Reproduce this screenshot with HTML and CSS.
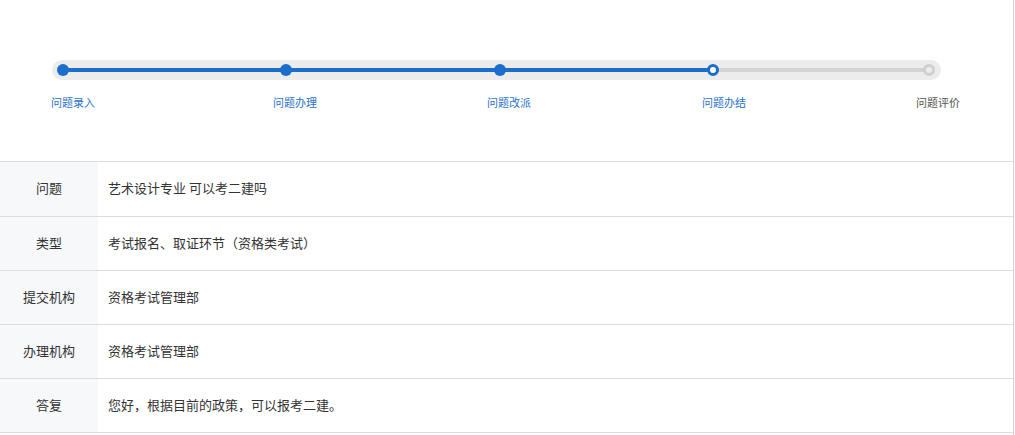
FILE: index.html
```html
<!DOCTYPE html>
<html lang="zh-CN">
<head>
<meta charset="utf-8">
<title>问题详情</title>
<link rel="stylesheet" href="styles.css">
</head>
<body>
<div class="page">
  <section class="steps">
    <div class="track">
      <span class="dot done"></span>
      <span class="seg done s1"></span>
      <span class="dot done"></span>
      <span class="seg done s2"></span>
      <span class="dot done"></span>
      <span class="seg done s3"></span>
      <span class="dot current"></span>
      <span class="seg todo s4"></span>
      <span class="dot todo"></span>
    </div>
    <div class="labels">
      <span class="label active l1">问题录入</span>
      <span class="label active l2">问题办理</span>
      <span class="label active l3">问题改派</span>
      <span class="label active l4">问题办结</span>
      <span class="label">问题评价</span>
    </div>
  </section>
  <section class="table">
    <div class="row first"><div class="key">问题</div><div class="val">艺术设计专业 可以考二建吗</div></div>
    <div class="row"><div class="key">类型</div><div class="val">考试报名、取证环节（资格类考试）</div></div>
    <div class="row"><div class="key">提交机构</div><div class="val">资格考试管理部</div></div>
    <div class="row"><div class="key">办理机构</div><div class="val">资格考试管理部</div></div>
    <div class="row"><div class="key">答复</div><div class="val">您好，根据目前的政策，可以报考二建。</div></div>
  </section>
</div>
</body>
</html>
```
FILE: styles.css
```css
html, body {
  margin: 0;
  padding: 0;
  background: #ffffff;
}
body {
  font-family: "Noto Sans CJK SC", "Microsoft YaHei", "Noto Sans", sans-serif;
  color: #333333;
}
.page {
  width: 1013px;
  height: 435px;
  border-right: 1px solid #d4d4d4;
  box-sizing: content-box;
  overflow: hidden;
}
.steps {
  height: 161px;
  padding-top: 60px;
  box-sizing: border-box;
}
.track {
  margin-left: 52px;
  width: 889px;
  height: 20px;
  border-radius: 10px;
  background: #ececec;
  display: flex;
  align-items: center;
  padding-left: 5px;
  box-sizing: border-box;
}
.dot {
  width: 12px;
  height: 12px;
  border-radius: 50%;
  box-sizing: border-box;
  flex: none;
  position: relative;
  z-index: 1;
}
.dot.done {
  background: #1b6ecb;
}
.dot.current {
  background: #ffffff;
  border: 3px solid #1b6ecb;
}
.dot.todo {
  background: #ececec;
  border: 3px solid #cfcfcf;
}
.seg {
  height: 4px;
  flex: none;
  margin: 0 -1px;
}
.seg.done { background: #1b6ecb; }
.seg.todo { background: #d3d3d3; }
.s1 { width: 213px; }
.s2 { width: 204px; }
.s3 { width: 203px; }
.s4 { width: 206px; }
.labels {
  display: flex;
  margin-left: 51px;
  margin-top: 14px;
  font-size: 11px;
  line-height: 16px;
}
.label {
  flex: none;
  color: #555555;
  white-space: nowrap;
}
.label.active { color: #2a72c8; }
.l1 { width: 222px; }
.l2 { width: 214px; }
.l3 { width: 215px; }
.l4 { width: 214px; }
.table {
  border-top: 1px solid #dcdcdc;
}
.row {
  display: flex;
  height: 54px;
  box-sizing: border-box;
  border-bottom: 1px solid #dcdcdc;
  font-size: 13px;
}
.row.first { height: 55px; }
.key {
  width: 98px;
  flex: none;
  background: #f7f8fa;
  display: flex;
  align-items: center;
  justify-content: center;
  padding-bottom: 3px;
  color: #333333;
}
.val {
  flex: 1;
  display: flex;
  align-items: center;
  padding-left: 10px;
  padding-bottom: 3px;
  color: #333333;
}
```
